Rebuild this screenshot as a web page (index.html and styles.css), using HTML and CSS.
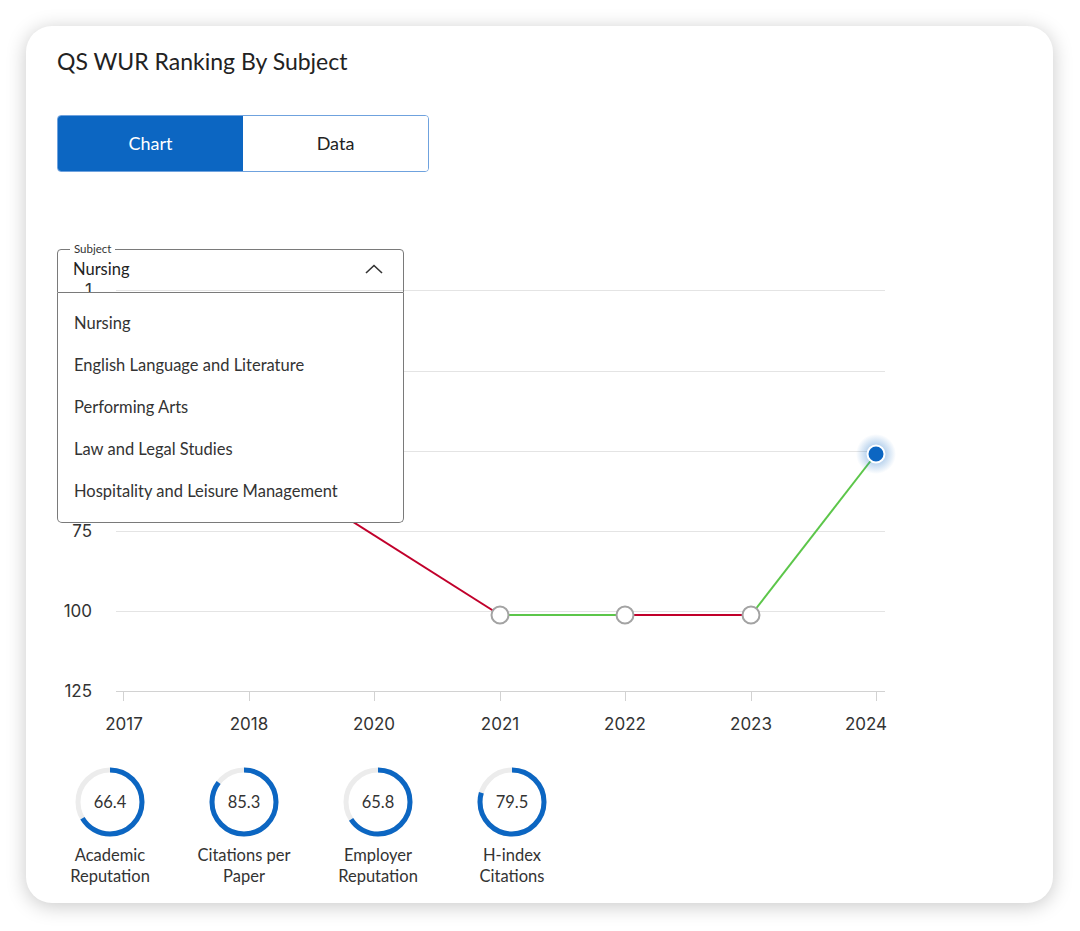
FILE: index.html
```html
<!DOCTYPE html>
<html lang="en">
<head>
<meta charset="utf-8">
<title>QS WUR Ranking By Subject</title>
<link rel="stylesheet" href="styles.css">
</head>
<body>
<div class="card">
  <h2 class="title">QS WUR Ranking By Subject</h2>
  <div class="tabs">
    <button class="tab tab-active">Chart</button>
    <button class="tab">Data</button>
  </div>

  <div class="chart">
    <svg class="chart-svg" width="1027" height="510" viewBox="26 240 1027 510">
      <defs>
        <radialGradient id="halo">
          <stop offset="0.45" stop-color="#0c66c2" stop-opacity="0.28"/>
          <stop offset="1" stop-color="#0c66c2" stop-opacity="0"/>
        </radialGradient>
      </defs>
      <g class="grid">
        <line x1="116" y1="290.5" x2="885" y2="290.5"/>
        <line x1="116" y1="371.5" x2="885" y2="371.5"/>
        <line x1="116" y1="451.5" x2="885" y2="451.5"/>
        <line x1="116" y1="531.5" x2="885" y2="531.5"/>
        <line x1="116" y1="611.5" x2="885" y2="611.5"/>
      </g>
      <g class="axis">
        <line x1="116" y1="691.5" x2="885" y2="691.5"/>
        <line x1="123.5" y1="691" x2="123.5" y2="701"/>
        <line x1="249.5" y1="691" x2="249.5" y2="701"/>
        <line x1="374.5" y1="691" x2="374.5" y2="701"/>
        <line x1="500.5" y1="691" x2="500.5" y2="701"/>
        <line x1="625.5" y1="691" x2="625.5" y2="701"/>
        <line x1="751.5" y1="691" x2="751.5" y2="701"/>
        <line x1="876.5" y1="691" x2="876.5" y2="701"/>
      </g>
      <g class="ylabels">
        <text x="92" y="296">1</text>
        <text x="92" y="537">75</text>
        <text x="92" y="617">100</text>
        <text x="92" y="697">125</text>
      </g>
      <g class="xlabels">
        <text x="124" y="730">2017</text>
        <text x="249" y="730">2018</text>
        <text x="374" y="730">2020</text>
        <text x="500" y="730">2021</text>
        <text x="625" y="730">2022</text>
        <text x="751" y="730">2023</text>
        <text x="866" y="730">2024</text>
      </g>
      <g class="series">
        <line class="down" x1="123" y1="440" x2="249" y2="456"/>
        <line class="down" x1="249" y1="456" x2="500" y2="615"/>
        <line class="up" x1="500" y1="615" x2="625" y2="615"/>
        <line class="down" x1="625" y1="615" x2="751" y2="615"/>
        <line class="up" x1="751" y1="615" x2="876" y2="454"/>
        <circle class="pt" cx="123" cy="440" r="8.5"/>
        <circle class="pt" cx="249" cy="456" r="8.5"/>
        <circle class="pt" cx="500" cy="615" r="8.5"/>
        <circle class="pt" cx="625" cy="615" r="8.5"/>
        <circle class="pt" cx="751" cy="615" r="8.5"/>
        <circle cx="876" cy="454" r="20" fill="url(#halo)"/>
        <circle class="pt-active" cx="876" cy="454" r="8.5"/>
      </g>
    </svg>

    <div class="select">
      <fieldset class="select-box">
        <legend class="select-legend">Subject</legend>
        <span class="select-value">Nursing</span>
        <svg class="chevron" width="18" height="10" viewBox="0 0 18 10"><path d="M1 9 L9 1.5 L17 9" fill="none" stroke="#333" stroke-width="1.6"/></svg>
      </fieldset>
      <ul class="menu">
        <li>Nursing</li>
        <li>English Language and Literature</li>
        <li>Performing Arts</li>
        <li>Law and Legal Studies</li>
        <li>Hospitality and Leisure Management</li>
      </ul>
    </div>
  </div>

  <div class="scores">
    <div class="score">
      <div class="ring">
        <svg width="70" height="70" viewBox="0 0 70 70"><circle class="track" cx="35" cy="35" r="32"/><circle class="arc" cx="35" cy="35" r="32" style="stroke-dasharray: 133.5 201.1"/></svg>
        <span class="ring-value">66.4</span>
      </div>
      <div class="score-label">Academic Reputation</div>
    </div>
    <div class="score">
      <div class="ring">
        <svg width="70" height="70" viewBox="0 0 70 70"><circle class="track" cx="35" cy="35" r="32"/><circle class="arc" cx="35" cy="35" r="32" style="stroke-dasharray: 171.5 201.1"/></svg>
        <span class="ring-value">85.3</span>
      </div>
      <div class="score-label">Citations per Paper</div>
    </div>
    <div class="score">
      <div class="ring">
        <svg width="70" height="70" viewBox="0 0 70 70"><circle class="track" cx="35" cy="35" r="32"/><circle class="arc" cx="35" cy="35" r="32" style="stroke-dasharray: 132.3 201.1"/></svg>
        <span class="ring-value">65.8</span>
      </div>
      <div class="score-label">Employer Reputation</div>
    </div>
    <div class="score">
      <div class="ring">
        <svg width="70" height="70" viewBox="0 0 70 70"><circle class="track" cx="35" cy="35" r="32"/><circle class="arc" cx="35" cy="35" r="32" style="stroke-dasharray: 159.9 201.1"/></svg>
        <span class="ring-value">79.5</span>
      </div>
      <div class="score-label">H-index Citations</div>
    </div>
  </div>
</div>
</body>
</html>
```

FILE: styles.css
```css
* { box-sizing: border-box; }

html, body {
  margin: 0;
  padding: 0;
  background: #ffffff;
}

body {
  font-family: Lato, "Liberation Sans", sans-serif;
  color: #222;
  padding: 26px;
  width: 1080px;
  height: 931px;
  overflow: hidden;
}

.card {
  width: 1027px;
  height: 877px;
  background: #fff;
  border-radius: 26px;
  box-shadow: 0 3px 20px rgba(0, 0, 0, 0.22);
  padding-top: 20px;
}

.title {
  margin: 0;
  padding-left: 31px;
  font-size: 23px;
  font-weight: 400;
  line-height: 30px;
  color: #222;
}

.tabs {
  display: flex;
  margin: 39px 0 0 31px;
  width: 372px;
  height: 57px;
  border: 1px solid #6fa2de;
  border-radius: 4px;
  overflow: hidden;
}

.tab {
  flex: 1;
  border: 0;
  background: #fff;
  font-family: inherit;
  font-size: 18px;
  color: #222;
  padding: 0 0 2px;
  cursor: pointer;
}

.tab-active {
  background: #0c66c2;
  color: #fff;
}

.chart {
  position: relative;
  margin-top: 68px;
  height: 510px;
}

.chart-svg {
  display: block;
}

.grid line { stroke: #e4e4e4; stroke-width: 1; }
.axis line { stroke: #d2d2d2; stroke-width: 1; }

.ylabels text {
  font-family: Inter, "Open Sans", sans-serif;
  font-size: 17px;
  fill: #333;
  text-anchor: end;
}

.xlabels text {
  font-family: Inter, "Open Sans", sans-serif;
  font-size: 17px;
  fill: #333;
  text-anchor: middle;
}

.series line { stroke-width: 2; }
.series .down { stroke: #c1002b; }
.series .up { stroke: #5cc64a; }
.series .pt { fill: #fff; stroke: #a3a3a3; stroke-width: 2; }
.series .pt-active { fill: #0c66c2; stroke: #fff; stroke-width: 2; }

.select {
  position: absolute;
  left: 31px;
  top: 3px;
  width: 347px;
}

.select-box {
  margin: 0;
  padding: 0 20px 0 15px;
  height: 50px;
  border: 1px solid #7a7a7a;
  border-radius: 4px 4px 0 0;
  display: flex;
  align-items: center;
  justify-content: space-between;
  min-width: 0;
}

.select-legend {
  padding: 0 4px;
  margin-left: -3px;
  font-size: 11.5px;
  color: #333;
  line-height: 12px;
}

.select-value {
  font-size: 16.5px;
  color: #222;
  margin-top: -10px;
}

.chevron {
  margin-top: -10px;
}

.menu {
  list-style: none;
  margin: 0;
  padding: 9px 0 10px;
  background: #fff;
  border: 1px solid #7a7a7a;
  border-top: 0;
  border-radius: 0 0 5px 5px;
}

.menu li {
  height: 42px;
  line-height: 42px;
  padding-left: 16px;
  font-size: 16.5px;
  color: #333;
}

.scores {
  display: flex;
  gap: 28px;
  margin: 17px 0 0 31px;
}

.score {
  width: 106px;
  display: flex;
  flex-direction: column;
  align-items: center;
}

.ring {
  position: relative;
  width: 70px;
  height: 70px;
}

.ring svg { display: block; }

.track { fill: none; stroke: #ececec; stroke-width: 5; }
.arc {
  fill: none;
  stroke: #0c66c2;
  stroke-width: 5;
  transform: rotate(-90deg);
  transform-origin: 35px 35px;
}

.ring-value {
  position: absolute;
  inset: 0;
  display: flex;
  align-items: center;
  justify-content: center;
  font-size: 16.5px;
  color: #333;
}

.score-label {
  margin-top: 8px;
  text-align: center;
  font-size: 16.5px;
  line-height: 21px;
  color: #333;
}
```
